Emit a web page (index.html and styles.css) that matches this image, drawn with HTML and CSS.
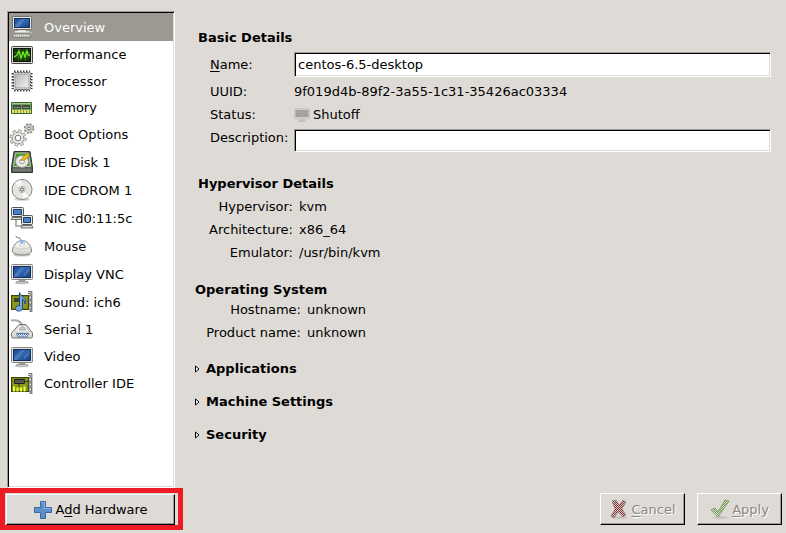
FILE: index.html
```html
<!DOCTYPE html>
<html lang="en">
<head>
<meta charset="utf-8">
<title>Virtual Machine Details</title>
<link rel="stylesheet" href="styles.css">
</head>
<body>
<svg class="defs" aria-hidden="true">
  <defs>
    <linearGradient id="blue" x1="0" y1="0" x2="1" y2="1"><stop offset="0" stop-color="#1c4a92"/><stop offset=".5" stop-color="#2f66ae"/><stop offset="1" stop-color="#164080"/></linearGradient>
    <linearGradient id="silver" x1="0" y1="0" x2="1" y2="1"><stop offset="0" stop-color="#b4b4b4"/><stop offset="1" stop-color="#f4f4f4"/></linearGradient>
    <linearGradient id="white" x1="0" y1="0" x2="0" y2="1"><stop offset="0" stop-color="#fff"/><stop offset="1" stop-color="#cfcfcc"/></linearGradient>
    <pattern id="checkRed" width="2" height="2" patternUnits="userSpaceOnUse"><path fill="#d3c5c2" d="M0 0h2v2H0z"/><path fill="#8a3038" d="M0 0h1v1H0zM1 1h1v1H1z"/></pattern>
    <pattern id="checkGreen" width="2" height="2" patternUnits="userSpaceOnUse"><path fill="#dde5d2" d="M0 0h2v2H0z"/><path fill="#6b9a4c" d="M0 0h1v1H0zM1 1h1v1H1z"/></pattern>
    <symbol id="monitor" viewBox="0 0 22 22">
      <ellipse cx="11" cy="20" rx="8" ry="1.5" fill="#000" opacity=".15"/>
      <path d="M8 16h6l.5 3h-7z" fill="#9a9a96"/>
      <path d="M5.500 18.500h11v1.500h-11z" fill="#e8e8e4" stroke="#888a85" stroke-width=".7"/>
      <rect x=".5" y="1.500" width="21" height="15" rx="1" fill="#e3e3df" stroke="#85867f"/>
      <rect x="2.500" y="3.500" width="17" height="11" fill="url(#blue)" stroke="#122f60"/>
      <path d="M3 12l7-8h4l-8 10H3zM12 12l6-7v3l-4 5z" fill="#7aa4dc" opacity=".35"/>
    </symbol>
    <symbol id="computer" viewBox="0 0 22 22">
      <path d="M7 13h8v3H7z" fill="#d4d4d0"/>
      <path d="M4 15h14v1.500H4z" fill="#f2f2ee"/>
      <rect x="1.500" y=".5" width="19" height="13" rx="1" fill="#e6e6e2" stroke="#6f706b"/>
      <rect x="3.500" y="2.500" width="15" height="9" fill="url(#blue)" stroke="#122f60"/>
      <path d="M4 9l6-6h4l-6 8H4z" fill="#7aa4dc" opacity=".4"/>
      <path d="M3 18h15l2 3H1z" fill="#eeeeea" stroke="#686963" stroke-width=".8"/>
      <path d="M4 19.500h13" stroke="#aaa" stroke-dasharray="1 1"/>
      <path d="M14 16h6v2" fill="none" stroke="#c8c8c2"/>
    </symbol>
    <symbol id="card" viewBox="0 0 22 22">
      <rect x=".5" y="4.500" width="17" height="14" fill="#7b8a08" stroke="#3d4700"/>
      <path d="M2 6h14v11H2z" fill="#8c9b1c"/>
      <path d="M17 1.500h3v19.500" fill="none" stroke="#555753" stroke-width="2.600"/>
      <path d="M17 1.500h3v19" fill="none" stroke="#d3d7cf" stroke-width="1"/>
      <path d="M18 5h2.500v3H18zm0 5h2.500v3H18zm0 5h2.500v3H18z" fill="#eee" stroke="#555" stroke-width=".7"/>
    </symbol>
  </defs>
</svg>

<div class="window">
  <aside class="sidebar">
    <nav class="tree" aria-label="Hardware">
      <button class="row selected"><svg class="icon"><use href="#computer"/></svg>Overview</button>
      <button class="row medium"><svg class="icon" viewBox="0 0 22 22"><rect x=".5" y="2.500" width="21" height="17" rx="1" fill="#d8dcd4" stroke="#454742"/><rect x="2.500" y="4.500" width="17" height="13" fill="#163807" stroke="#111"/><path d="M3 8.500h16M3 13h16M7.500 5v12M14.500 5v12" stroke="#326b17"/><path d="M3 13l3-2 2-4 2 7 2-6 2 5 2-6 1 4h2" fill="none" stroke="#73e92c" stroke-width="1.300"/></svg>Performance</button>
      <button class="row short"><svg class="icon" viewBox="0 0 22 22"><g fill="none" stroke="#3f403d" stroke-width="2" stroke-dasharray="1.500 1.500"><path d="M3 1.500h16M3 20.500h16M1.500 3v16M20.500 3v16"/></g><rect x="2.500" y="2.500" width="17" height="17" rx="1" fill="#f2f2ef" stroke="#555753" stroke-dasharray="2 1"/><rect x="4" y="4" width="14" height="14" fill="url(#silver)" stroke="#999"/></svg>Processor</button>
      <button class="row medium"><svg class="icon" viewBox="0 0 22 22"><path d="M.5 5.500h20v11H.5z" fill="#6da35b" stroke="#386a2d"/><path d="M1 6.500h19" stroke="#a4ca94"/><path d="M2 8h8v4H2zM11 8h8v4h-8z" fill="#444b43"/><path d="M3 10.500h6M12 10.500h6" stroke="#858e83"/><path d="M1 14.500h19" stroke="#f6df62" stroke-width="3" stroke-dasharray="2 1"/></svg>Memory</button>
      <button class="row medium"><svg class="icon" viewBox="0 0 22 22"><g fill="none" stroke="#777974"><circle cx="7" cy="14" r="7" stroke-width="3.200" stroke-dasharray="3 2.500"/><circle cx="7" cy="14" r="6" fill="#e7e8e5"/><circle cx="7" cy="14" r="6.800" stroke="#e7e8e5" stroke-width="2.400" stroke-dasharray="2 3.340" stroke-dashoffset="-.5"/><circle cx="7" cy="14" r="2.800" fill="#fff"/><circle cx="18" cy="4.500" r="4" fill="#c9cac5" stroke-width="2.600" stroke-dasharray="1.700 1.440"/><circle cx="18" cy="4.500" r="3.800" fill="#c9cac5" stroke="#b5b6b1"/><circle cx="18" cy="4.500" r="1.300" fill="#fff"/></g></svg>Boot Options</button>
      <button class="row"><svg class="icon" viewBox="0 0 22 22"><path d="M3 .5h16l2.500 16v5H.5v-5z" fill="#555b55" stroke="#31352f"/><path d="M4.500 2h13l2 13.500h-17z" fill="#479d27" stroke="#c3c9be"/><path d="M2 17.500h18v3H2z" fill="#747a72"/><ellipse cx="11" cy="10.500" rx="6.500" ry="6" fill="#e8ebe3" stroke="#8c9988"/><ellipse cx="11" cy="10.500" rx="2.500" ry="2" fill="#fff" stroke="#8e908a"/><path d="M17 2l-5 4-2 4 5-2 3-4z" fill="#f3c51c" stroke="#b2830b" stroke-width=".7"/></svg>IDE Disk 1</button>
      <button class="row"><svg class="icon" viewBox="0 0 22 22"><ellipse cx="11" cy="20.500" rx="8" ry="1.500" fill="#000" opacity=".18"/><circle cx="11" cy="10.500" r="10" fill="#e4e4e1" stroke="#848580"/><path d="M11 10.500L4 4a9 9 0 0 1 6-3zM11 10.500l7 7a9 9 0 0 1-6 2z" fill="#fafafa"/><circle cx="11" cy="10.500" r="3.200" fill="#d9d9d6" stroke="#bbb"/><circle cx="11" cy="10.500" r="1.500" fill="#fff" stroke="#555753"/></svg>IDE CDROM 1</button>
      <button class="row"><svg class="icon" viewBox="0 0 22 22"><path d="M5 11v8h7" fill="none" stroke="#999b96" stroke-width="1.500"/><g stroke="#555753"><rect x=".5" y=".5" width="12" height="9" rx="1" fill="#e8e9e5"/><path d="M2.500 2.500h8v5h-8z" fill="#4b83c9" stroke="#173e76"/><path d="M1 10.500h11l1 2H0z" fill="#d9dad5" stroke-width=".8"/><rect x="10.500" y="8.500" width="11" height="9" rx="1" fill="#e8e9e5"/><path d="M12.500 10.500h7v5h-7z" fill="#4b83c9" stroke="#173e76"/><path d="M11 18.500h10l1 2.500H10z" fill="#d9dad5" stroke-width=".8"/></g></svg>NIC :d0:11:5c</button>
      <button class="row"><svg class="icon" viewBox="0 0 22 22"><ellipse cx="11" cy="20" rx="9" ry="1.600" fill="#000" opacity=".2"/><path d="M5 1c0 3 5 0 5 5" fill="none" stroke="#666963"/><path d="M11 5.500c5 0 9 5 9.500 9.500.4 3-3 5-9.500 5S1 18 1.500 15C2 10.500 6 5.500 11 5.500z" fill="url(#white)" stroke="#7d7f79"/><path d="M2.500 12c3 2.500 14 2.500 17 0M8 6.500l1.500 5M14 6.500l-1.500 5" fill="none" stroke="#c4c5c0" stroke-width=".8"/><path d="M9 5h4l-1 4h-2z" fill="#87b5ec"/></svg>Mouse</button>
      <button class="row"><svg class="icon"><use href="#monitor"/></svg>Display VNC</button>
      <button class="row"><svg class="icon" viewBox="0 0 22 22"><use href="#card"/><path d="M3 7h5v4H3z" fill="#3c3f2d"/><path d="M8.500 1.500c1 4 6 4 6.500 9l-1 2.500c0-3-1-4-2.500-5V17c0 4-7 4-7 .5 0-2.500 2.500-3.500 4-2.500z" fill="#7ba7df" stroke="#204a87"/></svg>Sound: ich6</button>
      <button class="row medium"><svg class="icon" viewBox="0 0 22 22"><path d="M0 1.500c7-1 9 1 11 4" fill="none" stroke="#aaaba7" stroke-width="2"/><path d="M8 5.500h7l6.500 8.500v3.500q0 1.500-1.500 1.500H2Q.5 19 .5 17.500V14z" fill="url(#white)" stroke="#777974"/><path d="M8.500 6.500h6l4 6.500h-15z" fill="#fafaf8" stroke="#c5c6c2"/><path d="M8 11l2-3h3l2 3z" fill="#d0d1cc" stroke="#8b8d87" stroke-width=".7"/><path d="M5.500 14.500h12l-1.500 3.500H7z" fill="#e8f1fd" stroke="#5e7ea9"/><path d="M7 15.500h9M8 17h7" stroke="#3465a4" stroke-dasharray="1 1"/></svg>Serial 1</button>
      <button class="row medium"><svg class="icon"><use href="#monitor"/></svg>Video</button>
      <button class="row medium"><svg class="icon" viewBox="0 0 22 22"><use href="#card"/><path d="M3.500 6.500h10v4h-10z" fill="#55584f" stroke="#222"/><path d="M13 8.500h4M8 11v3" stroke="#343b09"/><path d="M3 18.500v-5M6.500 18.500v-4M10 18.500v-4M13.500 18.500v-5" stroke="#efff3c" stroke-width="2"/></svg>Controller IDE</button>
    </nav>
    <div class="highlight">
      <button class="push add"><svg class="plus" viewBox="0 0 20 20"><path d="M7.500 1.500h5v6h6v5h-6v6h-5v-6h-6v-5h6z" fill="#5d8fc9" stroke="#3c689e"/><path d="M8.500 2.500h3v6h6" fill="none" stroke="#8db2de"/></svg><span>A<u>d</u>d Hardware</span></button>
    </div>
  </aside>

  <main class="details">
    <section class="group">
      <h2>Basic Details</h2>
      <div class="fields basic">
        <label for="name"><u>N</u>ame:</label><input id="name" class="name" type="text" value="centos-6.5-desktop">
        <span>UUID:</span><span>9f019d4b-89f2-3a55-1c31-35426ac03334</span>
        <span>Status:</span><span class="status"><svg class="off" viewBox="0 0 16 14"><path d="M5 11h6v1.500H5zM4 12.500h8V14H4z" fill="#c3c2bf"/><rect x=".5" y=".5" width="15" height="10.500" rx="1" fill="#cfcecb" stroke="#c8c7c4"/><path d="M1.500 2h13v7h-13z" fill="#a3a29f"/></svg>Shutoff</span>
        <label for="description">Description:</label><input id="description" type="text">
      </div>
    </section>
    <section class="group">
      <h2>Hypervisor Details</h2>
      <div class="fields hypervisor">
        <span>Hypervisor:</span><span>kvm</span>
        <span>Architecture:</span><span>x86_64</span>
        <span>Emulator:</span><span>/usr/bin/kvm</span>
      </div>
    </section>
    <section class="system">
      <h2>Operating System</h2>
      <div class="fields guest">
        <span>Hostname:</span><span>unknown</span>
        <span>Product name:</span><span>unknown</span>
      </div>
    </section>
    <div class="expanders">
      <details><summary><svg class="arrow" viewBox="0 0 5 8"><path d="M.5 1v6L4 4z" fill="#fff" stroke="#000"/></svg>Applications</summary></details>
      <details><summary><svg class="arrow" viewBox="0 0 5 8"><path d="M.5 1v6L4 4z" fill="#fff" stroke="#000"/></svg>Machine Settings</summary></details>
      <details><summary><svg class="arrow" viewBox="0 0 5 8"><path d="M.5 1v6L4 4z" fill="#fff" stroke="#000"/></svg>Security</summary></details>
    </div>
    <footer class="actions">
      <button class="push" disabled><svg class="plus" viewBox="0 0 20 20"><ellipse cx="10" cy="18.500" rx="8" ry="1.500" fill="#000" opacity=".1"/><path d="M3 2l4-1 3 5 4-5 3 2-4 7 4 6-3 2-5-5-4 6-3-2 4-7z" fill="url(#checkRed)" stroke="#887573" stroke-width=".6"/></svg><span><u>C</u>ancel</span></button>
      <button class="push" disabled><svg class="plus" viewBox="0 0 20 20"><ellipse cx="10" cy="18.500" rx="8" ry="1.500" fill="#000" opacity=".1"/><path d="M1 11l4-2 3 4 7-12 4 1L8 18z" fill="url(#checkGreen)" stroke="#73905f" stroke-width=".8"/></svg><span><u>A</u>pply</span></button>
    </footer>
  </main>
</div>
</body>
</html>
```
FILE: styles.css
```css
* {
  box-sizing: border-box;
}

body {
  margin: 0;
  background: #dedbd6;
  color: #000;
  font: 13px/17px "DejaVu Sans", sans-serif;
}

button,
input {
  font: inherit;
  color: inherit;
  border-radius: 0;
}

h2,
summary {
  margin: 0;
  font-size: 13px;
  font-weight: bold;
}

u {
  text-decoration-thickness: 1px;
  text-underline-offset: 2px;
  text-decoration-skip-ink: none;
}

.defs {
  position: absolute;
  width: 0;
  height: 0;
}

.window {
  display: flex;
  min-height: 100vh;
}

.sidebar {
  display: flex;
  flex-direction: column;
  flex: 0 0 183px;
  padding: 11px 0 3px;
}

.tree,
input {
  background: #fff;
  border: 1px solid;
  border-color: #9c9a94 #fff #fff #9c9a94;
  box-shadow: inset 1px 1px #000, inset -1px -1px #dedbd6;
}

.tree {
  flex: 1;
  margin: 0 8px 0 7px;
  padding: 1px;
}

.row {
  display: flex;
  align-items: center;
  gap: 11px;
  width: 100%;
  height: 28px;
  padding: 0 2px;
  border: 0;
  background: none;
  text-align: left;
  white-space: nowrap;
}

.medium {
  height: 27px;
}

.short {
  height: 26px;
}

.selected {
  background: #9c9892;
  color: #fff;
}

.icon {
  flex: none;
  width: 22px;
  height: 22px;
  overflow: visible;
}

.highlight {
  border: 5px solid #ed1c24;
  padding: 1px 3px 0 1px;
}

.push {
  display: flex;
  align-items: center;
  justify-content: center;
  gap: 2px;
  height: 32px;
  padding: 0 12px;
  background: #dedbd6;
  border: 1px solid;
  border-color: #fff #000 #000 #fff;
  box-shadow: inset -1px -1px #9c9a94;
}

.push:disabled {
  color: #8c8983;
  text-shadow: 1px 1px #fff;
}

.add {
  width: 100%;
  height: 31px;
}

.plus {
  flex: none;
  width: 20px;
  height: 20px;
}

.details {
  display: flex;
  flex-direction: column;
  flex: 1;
  min-width: 0;
  padding: 29px 4px 8px 12px;
}

.group {
  margin: 0 11px 0 3px;
}

.group + .group {
  margin-top: 23px;
}

.fields {
  display: grid;
  gap: 6px;
  margin-top: 6px;
}

.basic {
  grid-template-columns: 78px 1fr;
  margin-left: 12px;
}

input {
  width: 100%;
  height: 23px;
  padding: 0 3px;
  outline: 0;
}

.name {
  height: 25px;
}

label[for="name"] {
  align-self: center;
}

.status {
  display: flex;
  align-items: center;
  gap: 3px;
}

.off {
  width: 16px;
  height: 14px;
}

.hypervisor {
  grid-template-columns: 95px 1fr;
}

.guest {
  grid-template-columns: 106px 1fr;
  margin-top: 3px;
}

.hypervisor span:nth-child(odd),
.guest span:nth-child(odd) {
  text-align: right;
}

.system {
  margin-top: 20px;
}

.expanders {
  display: grid;
  gap: 16px;
  margin-top: 19px;
}

summary {
  display: flex;
  align-items: center;
  gap: 6px;
  list-style: none;
}

.arrow {
  width: 5px;
  height: 8px;
}

.actions {
  display: flex;
  justify-content: flex-end;
  gap: 12px;
  margin-top: auto;
}

.actions .push {
  width: 85px;
  padding: 0;
}
```
